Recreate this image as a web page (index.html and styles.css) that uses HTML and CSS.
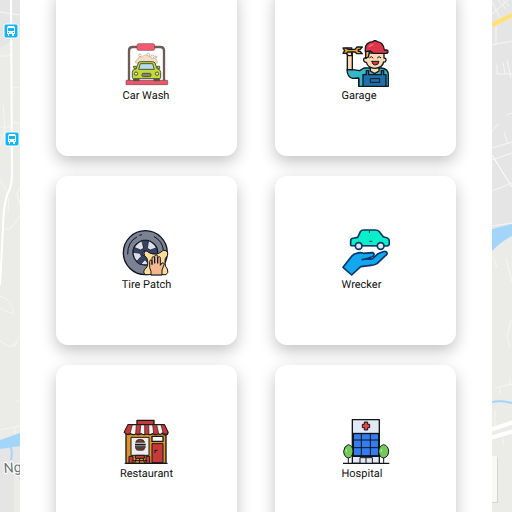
FILE: index.html
```html
<!DOCTYPE html>
<html lang="en">
<head>
<meta charset="utf-8">
<meta name="viewport" content="width=device-width, initial-scale=1">
<title>Services</title>
<link rel="stylesheet" href="styles.css">
</head>
<body>
<svg class="map" viewBox="0 0 512 512" preserveAspectRatio="xMidYMid slice" aria-hidden="true">
  <rect width="512" height="512" fill="#ebebe7"/>
  <path fill="#e5e5e5" d="M0 0H20V36L0 48ZM490 0H512V235L490 240ZM0 447L20 440V480L14 474V512H0Z"/>
  <g fill="none" stroke="#f6f6f5" stroke-width="1">
    <path d="M0 12L20 15M0 56Q8 57 12 54M12 88L20 87M0 127H12M13 122L20 124M3 105L5 130L0 145M0 180L7 191M20 187L17 194L20 205M5 229H10L20 216M9 197L8 212M0 296Q12 299 14 314Q5 312 0 308M20 335L16 344L13 347M0 341L10 347L16 343M16 402L20 400M0 430L20 426M14 428L16 434"/>
    <path d="M492 2L501 20M498 0L506 9M503 0L509 6M492 14L508 0M492 45L512 41M496 25V44M497 65V74H512M503 62L505 74M507 60L511 78M506 115L512 113M492 132L498 124M504 132L508 144M492 148L512 142M492 160L512 153M492 191L512 183M492 226L512 223M493 257L497 268M506 258L512 282M511 320L507 338L510 347M495 388L512 384M500 388V394M510 379V386M495 410V428M502 438L504 445"/>
    <path stroke="#fff" d="M492 155L512 187"/>
  </g>
  <path fill="none" stroke="#fff" stroke-width="2" d="M11 0L12 175Q12 186 7 195Q3 210 3 228L0 285"/>
  <path fill="#a3d5fa" d="M0 440L20 433V446L0 449ZM492 229L512 224V236Q502 241 492 251Z"/>
  <path fill="none" stroke="#a3d5fa" stroke-width="2" d="M10 446Q13 451 11 460M492 402Q501 400 512 403"/>
  <path fill="none" stroke="#f6e7b8" stroke-width="6" d="M492 25L512 15"/>
  <path fill="none" stroke="#fce07a" stroke-width="4" d="M492 25L512 15"/>
  <path fill="none" stroke="#fff" stroke-width="4" d="M490 430L514 422M490 438L514 431"/>
  <rect x="480" y="457" width="18" height="46" rx="1" fill="#d4d4d2"/>
  <rect x="480" y="456" width="17" height="46" rx="1" fill="#f8f8f7"/>
  <g id="bus-stop">
    <rect x="4" y="24" width="14" height="14" rx="2" fill="#12b5f5" stroke="#fff"/>
    <path fill="#fff" d="M8 26H14L15 28V34H14V36H12V34H9V36H8V34H7V28Z"/>
    <path fill="#12b5f5" d="M8 28H14V31H8ZM8 32H9V33H8ZM13 32H14V33H13Z"/>
  </g>
  <use href="#bus-stop" x="1" y="108"/>
  <text class="place" x="4" y="473" transform="rotate(-4 4 473)">Ng</text>
</svg>

<main class="panel">
  <div class="services">
    <button class="card" type="button"><span class="item">
      <svg class="icon" viewBox="22 15 144 144" aria-hidden="true">
        <path fill="none" stroke="#6e5c57" stroke-width="7" d="M40 137V47Q40 36 50 36H134Q145 36 145 47V137"/>
        <rect x="64" y="26" width="53" height="20" rx="5" fill="#f25b72" stroke="#7b4c50" stroke-width="2"/>
        <path fill="#f5dfc2" stroke="#c9ad92" stroke-width="2" d="M60 84Q57 76 65 74Q68 63 79 66Q89 55 101 64Q112 61 115 70Q126 71 125 84Z"/>
        <g fill="#fff" stroke="#b9977d" stroke-width="2"><circle cx="73" cy="61" r="4"/><circle cx="98" cy="59" r="4"/><circle cx="110" cy="65" r="5"/><circle cx="121" cy="66" r="3"/></g>
        <rect x="31" y="136" width="125" height="13" rx="1" fill="#ee566d" stroke="#734649" stroke-width="2"/>
        <g stroke="#4e5342" stroke-width="3">
          <path fill="#55504a" d="M54 124H70V137H54ZM115 124H131V137H115Z"/>
          <path fill="#c4d936" d="M68 84Q69 80 75 80H110Q116 80 118 84L124 101Q135 103 135 112V128Q135 131 131 131H54Q50 131 50 127V112Q50 103 61 101Z"/>
          <path fill="#b7ddeb" d="M74 86H111L116 103H69Z"/>
          <path fill="#c4d936" d="M53 94H62V101H56ZM123 94H132V101H127Z"/>
          <rect x="79" y="115" width="27" height="10" rx="4" fill="#83817c"/>
          <circle cx="61" cy="116" r="5" fill="#f6e79b"/><circle cx="124" cy="116" r="5" fill="#f6e79b"/>
        </g>
      </svg>
      <span class="label">Car Wash</span>
    </span></button>

    <button class="card" type="button"><span class="item">
      <svg class="icon" viewBox="25 15 144 144" aria-hidden="true">
        <g stroke="#101820" stroke-width="4" stroke-linejoin="round" stroke-linecap="round">
          <path fill="#35b7c8" d="M40 104H57L78 107L91 99H143Q164 102 164 119V154H75V129L57 130Q41 127 40 104Z"/>
          <path fill="#fdd9b5" d="M41 104V54H56V104Z"/>
          <path fill="#fdd9b5" d="M39 39H54V62H45Q39 60 39 54Z"/>
          <path fill="#efa12b" d="M28 39H38L43 43H64L70 36H86L79 44H74V49H79L86 56H70L64 51H43L38 55H28L33 47Z"/>
          <path fill="#fdd9b5" d="M110 91H136V108L123 116L110 108Z"/>
          <path fill="#fdd9b5" d="M97 54H151V69Q158 69 157 76Q156 82 150 81Q146 99 124 100Q103 99 98 82Q89 81 90 74Q90 68 97 68Z"/>
          <path fill="#f5b45b" d="M96 47H108L104 66L96 70Z"/>
          <path fill="#e03548" d="M95 50V41Q96 22 117 20L124 16L131 20Q150 23 152 45H159Q164 46 163 51Q162 55 157 55H119L110 48Z"/>
          <path fill="#216fa9" d="M88 154V119H98V107H105V119H143V107H150V119H157V154Z"/>
          <path fill="none" stroke-width="3" d="M111 131H138V142H111ZM76 131V153M108 68L113 65L118 69M131 69L136 65L141 68"/>
          <path fill="#d53a45" stroke-width="3" d="M115 79H136Q135 90 125 90Q116 90 115 79Z"/>
        </g>
        <path fill="none" stroke="#ff7a7d" stroke-width="4" d="M106 36Q110 30 119 29"/>
      </svg>
      <span class="label">Garage</span>
    </span></button>

    <button class="card" type="button"><span class="item">
      <svg class="icon" viewBox="22 12 144 144" aria-hidden="true">
        <g stroke="#10121f" stroke-width="4" stroke-linejoin="round" stroke-linecap="round">
          <circle cx="92" cy="83" r="66" fill="#7b8292"/>
          <circle cx="92" cy="83" r="37" fill="#dde0e7"/>
          <path fill="#354466" stroke-width="2" d="M82 46H102L98 70L107 75L126 68L129 84L107 89L103 99L115 116L104 120L91 104L77 119L65 110L80 94L76 85L55 82L58 67L78 75L86 70Z"/>
          <circle cx="91" cy="85" r="8" fill="#59698a" stroke-width="2"/>
          <path fill="none" stroke-width="3" d="M39 87Q38 52 66 36M75 31L81 29M119 35Q143 48 146 74"/>
          <path fill="#ffdc98" stroke-width="3" d="M91 78Q98 76 103 83Q125 93 139 81Q145 73 154 77Q163 83 158 92Q149 99 151 113Q151 125 158 132Q163 143 154 149H91Q83 141 90 133Q101 126 99 110Q99 98 90 92Q85 84 91 78Z"/>
          <path fill="#f3b88d" stroke-width="3" d="M109 149V139L105 128V109Q105 105 109 105Q112 105 112 110V119V100Q112 95 116 95Q120 95 120 100V115V94Q121 90 125 90Q129 90 129 94V115V99Q130 95 134 95Q138 96 137 101V121L142 114Q147 112 149 117L142 135V149Z"/>
        </g>
      </svg>
      <span class="label">Tire Patch</span>
    </span></button>

    <button class="card" type="button"><span class="item">
      <svg class="icon" viewBox="25 12 144 144" aria-hidden="true">
        <g stroke="#09356b" stroke-width="5" stroke-linejoin="round">
          <path fill="#09efca" d="M53 62Q50 61 51 55V46Q52 40 61 39L72 37L80 20Q83 15 90 15H125Q132 15 137 20L149 35L161 39Q167 42 167 49V57Q166 63 160 63Z"/>
          <circle cx="75" cy="63" r="10" fill="#dcebfa"/><circle cx="141" cy="63" r="10" fill="#dcebfa"/>
          <path fill="#13a7ed" d="M28 127L54 94Q60 86 69 85Q79 81 90 85L115 83Q122 84 121 90Q118 97 109 98L96 102H116L133 86L148 80Q157 77 160 83Q162 89 153 94L130 116Q122 121 112 121L81 125L54 150Z"/>
          <path fill="none" d="M84 104L96 102H113"/>
        </g>
        <path fill="none" stroke="#09356b" stroke-width="3" d="M107 17V24M107 49H116"/>
      </svg>
      <span class="label">Wrecker</span>
    </span></button>

    <button class="card" type="button"><span class="item">
      <svg class="icon icon-wide" viewBox="21 15 144 144" aria-hidden="true">
        <g stroke="#161719" stroke-width="4" stroke-linejoin="round">
          <path fill="#e0952a" d="M33 61H153V151H33Z"/>
          <rect x="66" y="22" width="51" height="16" fill="#c63a3c"/>
          <path fill="#f5f3f1" d="M39 35H148L159 58Q158 66 151 66Q144 66 142 60Q138 67 128 62Q121 68 113 62Q104 68 96 62Q87 68 79 62Q70 68 63 62Q55 68 46 62Q38 69 28 58Z"/>
          <path fill="#c63a3c" stroke-width="2" d="M39 35H52L45 62Q36 67 28 58ZM64 35H77L75 62Q69 66 62 62ZM89 35H101L102 62Q94 67 89 62ZM113 35H125L131 62Q122 67 116 62ZM138 35H148L159 58Q155 67 145 62Z"/>
          <rect x="48" y="73" width="54" height="54" fill="#eeecec" stroke-width="3"/>
          <rect x="111" y="70" width="33" height="15" fill="#fff"/>
          <rect x="111" y="92" width="33" height="57" fill="#c63a3c" stroke-width="3"/>
          <path fill="#85382c" stroke-width="2" d="M62 88Q64 79 75 79Q87 79 89 88ZM62 106H89Q88 112 82 112H70Q63 112 62 106Z"/>
        </g>
        <path stroke="#161719" stroke-width="5" d="M60 95H92M60 102H92"/>
        <path fill="none" stroke="#161719" stroke-width="3" d="M120 120V112H128"/>
        <path fill="#c63a3c" stroke="#161719" stroke-width="3" d="M42 130H54V151H42ZM61 127H88V136H61ZM93 130H104V151H93Z"/>
        <path fill="none" stroke="#161719" stroke-width="3" d="M59 151L64 136M89 151L84 136M74 136V151M54 143H97M29 151H158"/>
      </svg>
      <span class="label">Restaurant</span>
    </span></button>

    <button class="card" type="button"><span class="item">
      <svg class="icon" viewBox="25 15 144 144" aria-hidden="true">
        <g stroke="#11151b" stroke-width="4" stroke-linejoin="round">
          <path fill="#e2e9f5" d="M56 20H137V151H56Z"/>
          <path fill="#347df0" d="M59 62H135V130H59Z"/>
          <path fill="none" stroke-width="3" d="M56 61H137M59 81H135M59 104H135M59 128H135M83 62V128M110 62V128"/>
          <path fill="#e64343" stroke-width="3" d="M92 27H102V34H108V44H102V51H92V44H86V34H92Z"/>
          <path fill="#e2e9f5" stroke-width="3" d="M79 151V134H116V151M97 134V151"/>
          <path fill="#73c95a" stroke-width="3" d="M44 95Q58 98 58 115Q57 133 44 135Q31 132 30 115Q31 99 44 95ZM150 95Q164 98 165 115Q164 132 150 135Q136 133 135 115Q136 98 150 95Z"/>
          <path fill="none" d="M28 151H167"/>
          <path stroke-width="3" d="M44 135V151M150 135V151"/>
        </g>
        <path fill="none" stroke="#a9e897" stroke-width="4" d="M38 108V117M143 108V117"/>
      </svg>
      <span class="label">Hospital</span>
    </span></button>
  </div>
</main>
</body>
</html>
```
FILE: styles.css
```css
* {
  box-sizing: border-box;
}

body {
  margin: 0;
  height: 100vh;
  overflow: hidden;
  padding: 0 20px;
  font-family: Roboto, "Liberation Sans", sans-serif;
  color: #111;
  text-rendering: geometricPrecision;
}

.map {
  position: absolute;
  top: 0;
  left: 0;
  width: 100%;
  height: 100%;
  z-index: -1;
}

.place {
  font-family: Roboto, sans-serif;
  font-size: 14px;
  fill: #6a747b;
  stroke: #fff;
  stroke-width: 2px;
  paint-order: stroke;
}

.panel {
  min-height: 100%;
  padding: 0 36px;
  background: #fff;
  overflow: hidden;
}

/* The list rests partly scrolled, so its first row starts above the fold. */
.services {
  display: grid;
  grid-template-columns: 1fr 1fr;
  grid-auto-rows: 169px;
  gap: 20px 38px;
  margin-top: -13px;
}

.card {
  display: flex;
  align-items: center;
  justify-content: center;
  padding: 0;
  border: 0;
  border-radius: 12px;
  background: #fff;
  box-shadow: 0 6px 16px rgba(0, 0, 0, 0.24);
  font: inherit;
  color: inherit;
  text-rendering: inherit;
  cursor: pointer;
}

.item {
  display: flex;
  flex-direction: column;
  align-items: flex-start;
}

.icon {
  width: 48px;
  height: 48px;
}

.icon-wide {
  align-self: center;
}

.label {
  font-size: 11px;
  line-height: 15px;
  white-space: nowrap;
}
```
